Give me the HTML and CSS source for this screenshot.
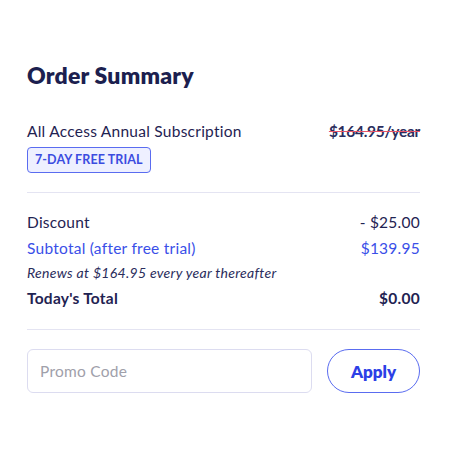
FILE: index.html
```html
<!DOCTYPE html>
<html>
<head>
<meta charset="utf-8">
<link rel="stylesheet" href="styles.css">
</head>
<body>
<div class="summary">
  <h1 class="title">Order Summary</h1>
  <div class="product">
    <div class="row">
      <span>All Access Annual Subscription</span>
      <span class="old-price">$164.95/year</span>
    </div>
    <span class="badge">7-DAY FREE TRIAL</span>
  </div>
  <div class="totals">
    <div class="row">
      <span>Discount</span>
      <span>- $25.00</span>
    </div>
    <div class="row blue">
      <span>Subtotal (after free trial)</span>
      <span>$139.95</span>
    </div>
    <div class="note">Renews at $164.95 every year thereafter</div>
    <div class="row bold">
      <span>Today's Total</span>
      <span>$0.00</span>
    </div>
  </div>
  <div class="promo">
    <input class="promo-input" type="text" placeholder="Promo Code">
    <button class="apply">Apply</button>
  </div>
</div>
</body>
</html>
```
FILE: styles.css
```css
html, body {
  margin: 0;
  padding: 0;
  background: #ffffff;
}
body {
  font-family: "Lato", "Open Sans", sans-serif;
  color: #1f2352;
}
.summary {
  width: 393px;
  padding: 61px 0 0 27px;
}
.title {
  margin: 0;
  font-size: 23px;
  font-weight: 800;
  line-height: 28px;
  letter-spacing: 0.2px;
  color: #1c1f4f;
}
.product {
  margin-top: 32px;
  padding-bottom: 19px;
  border-bottom: 1px solid #e4e4f2;
}
.row {
  display: flex;
  justify-content: space-between;
  font-size: 15.5px;
  line-height: 20px;
  letter-spacing: 0.25px;
}
.old-price {
  font-weight: 700;
  letter-spacing: -0.3px;
  color: #2a2d5c;
  text-decoration: line-through;
  text-decoration-color: #e8566b;
}
.badge {
  display: inline-block;
  margin-top: 6px;
  padding: 4px 7px;
  font-size: 12.5px;
  font-weight: 700;
  line-height: 16px;
  letter-spacing: 0.1px;
  color: #3b4ce0;
  background: #eef0ff;
  border: 1px solid #5a6cf0;
  border-radius: 4px;
}
.totals {
  padding: 19px 0 21px;
  border-bottom: 1px solid #e4e4f2;
  display: flex;
  flex-direction: column;
  gap: 6px;
}
.blue {
  color: #3a4fe8;
}
.bold {
  font-weight: 700;
}
.note {
  font-size: 14px;
  font-style: italic;
  line-height: 18px;
  letter-spacing: 0.3px;
  color: #2a2d5c;
}
.promo {
  display: flex;
  gap: 15px;
  margin-top: 19px;
}
.promo-input {
  flex: 1;
  height: 44px;
  box-sizing: border-box;
  padding: 0 12px;
  font-family: inherit;
  font-size: 15.5px;
  letter-spacing: 0.25px;
  color: #1f2352;
  border: 1px solid #dcdcf0;
  border-radius: 6px;
  outline: none;
}
.promo-input::placeholder {
  color: #a0a0aa;
}
.apply {
  width: 93px;
  height: 44px;
  font-family: inherit;
  font-size: 17px;
  font-weight: 800;
  color: #2c40e6;
  background: #fff;
  border: 1.5px solid #5a6cf0;
  border-radius: 22px;
}
```
